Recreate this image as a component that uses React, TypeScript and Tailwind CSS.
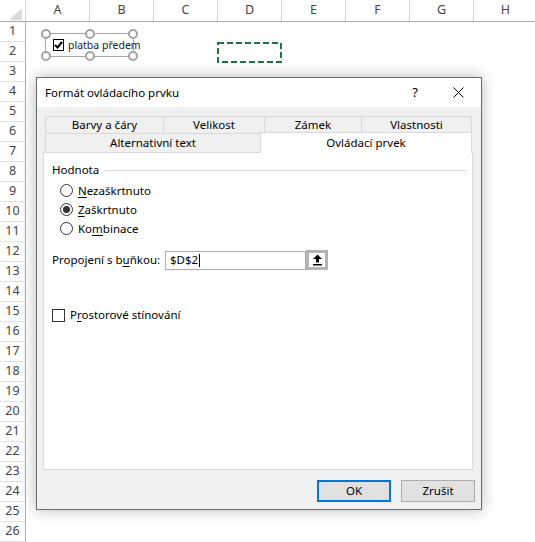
import React from 'react';

const columns = ['A', 'B', 'C', 'D', 'E', 'F', 'G', 'H'];
const rows = Array.from({ length: 26 }, (_, i) => i + 1);

const Radio: React.FC<{ checked?: boolean }> = ({ checked }) => (
  <span className="w-[13px] h-[13px] rounded-full border border-[#333] bg-white flex items-center justify-center shrink-0">
    {checked && <span className="w-[7px] h-[7px] rounded-full bg-[#333]" />}
  </span>
);

const Handle: React.FC<{ className: string }> = ({ className }) => (
  <span className={`absolute w-[10px] h-[10px] rounded-full border-2 border-[#a3a3a3] bg-white ${className}`} />
);

const App: React.FC = () => {
  return (
    <div className="relative w-[535px] h-[542px] bg-white overflow-hidden font-['Noto_Sans',sans-serif] text-black">
      {/* Column headers */}
      <div className="flex h-[22px] border-b border-[#ababab]">
        <div className="w-[26px] shrink-0 border-r border-[#d4d4d4] relative">
          <svg className="absolute left-[9px] top-[8px]" width="13" height="12" viewBox="0 0 13 12">
            <polygon points="13,0 13,12 0,12" fill="#dadada" />
          </svg>
        </div>
        {columns.map((c) => (
          <div key={c} className="w-[64px] shrink-0 border-r border-[#d4d4d4] flex items-center justify-center text-[12.5px] text-[#444]">
            {c}
          </div>
        ))}
      </div>

      {/* Rows */}
      <div className="flex">
        <div className="w-[26px] shrink-0 border-r border-[#ababab]">
          {rows.map((r) => (
            <div key={r} className="h-[20px] border-b border-[#e1e1e1] flex items-center justify-center text-[12.5px] text-[#444]">
              {r}
            </div>
          ))}
        </div>
        <div className="flex-1 bg-white" />
      </div>

      {/* Form control checkbox in sheet */}
      <div className="absolute left-[45px] top-[33px] w-[89px] h-[24px] border border-[#a6a6a6]">
        <div className="flex items-center h-full pl-[7px] gap-[4px]">
          <span className="w-[12px] h-[12px] border border-black bg-white flex items-center justify-center">
            <svg width="9" height="8" viewBox="0 0 9 8">
              <path d="M1 4 L3.5 6.5 L8 1" fill="none" stroke="#000" strokeWidth="2" />
            </svg>
          </span>
          <span className="text-[10.5px] text-[#222] whitespace-nowrap leading-none">platba předem</span>
        </div>
        <Handle className="-left-[5px] -top-[5px]" />
        <Handle className="left-[39px] -top-[5px]" />
        <Handle className="-right-[5px] -top-[5px]" />
        <Handle className="-left-[5px] -bottom-[5px]" />
        <Handle className="left-[39px] -bottom-[5px]" />
        <Handle className="-right-[5px] -bottom-[5px]" />
      </div>

      {/* Copy marquee on D2 */}
      <svg className="absolute left-[217px] top-[42px]" width="65" height="21" viewBox="0 0 65 21">
        <rect x="1" y="1" width="63" height="19" fill="none" stroke="#217346" strokeWidth="2" strokeDasharray="6 3" />
      </svg>

      {/* Dialog */}
      <div className="absolute left-[36px] top-[77px] w-[446px] h-[433px] border border-[#6a6a6a] bg-[#f0f0f0] shadow-[0_0_14px_rgba(0,0,0,0.28)] flex flex-col text-[11.5px]">
        <div className="h-[29px] bg-white flex items-center pl-[8px] shrink-0">
          <span className="flex-1 text-[11.5px]">Formát ovládacího prvku</span>
          <span className="text-[13px] mr-[35px]">?</span>
          <svg className="mr-[17px]" width="11" height="11" viewBox="0 0 11 11">
            <path d="M0.5 0.5 L10.5 10.5 M10.5 0.5 L0.5 10.5" stroke="#000" strokeWidth="1" />
          </svg>
        </div>

        <div className="flex-1 flex flex-col pl-[6px] pr-[6px] pt-[9px]">
          {/* Tabs */}
          <div className="ml-[2px] mr-[2px] flex flex-col">
            <div className="flex h-[17px]">
              <div className="w-[118px] border-t border-l border-[#d9d9d9] flex items-center justify-center">Barvy a čáry</div>
              <div className="w-[101px] border-t border-l border-[#d9d9d9] flex items-center justify-center">Velikost</div>
              <div className="w-[97px] border-t border-l border-[#d9d9d9] flex items-center justify-center">Zámek</div>
              <div className="w-[111px] border-t border-l border-r border-[#d9d9d9] flex items-center justify-center">Vlastnosti</div>
            </div>
            <div className="flex h-[19px]">
              <div className="w-[215px] border-t border-l border-[#d9d9d9] flex items-center justify-center">Alternativní text</div>
              <div className="relative z-10 w-[212px] h-[21px] -mt-[1px] bg-white border-t border-l border-r border-[#d9d9d9] flex items-center justify-center">
                Ovládací prvek
              </div>
            </div>
          </div>

          {/* Panel */}
          <div className="mr-[2px] h-[318px] bg-white border border-[#d9d9d9] pl-[8px] pt-[9px] flex flex-col">
            <div className="flex items-center h-[16px]">
              <span>Hodnota</span>
              <span className="flex-1 h-px bg-[#dcdcdc] ml-[5px] mr-[5px]" />
            </div>
            <div className="mt-[3px] ml-[8px] flex flex-col">
              <div className="h-[19px] flex items-center gap-[5px]">
                <Radio />
                <span><span className="underline underline-offset-2">N</span>ezaškrtnuto</span>
              </div>
              <div className="h-[19px] flex items-center gap-[5px]">
                <Radio checked />
                <span><span className="underline underline-offset-2">Z</span>aškrtnuto</span>
              </div>
              <div className="h-[19px] flex items-center gap-[5px]">
                <Radio />
                <span>Ko<span className="underline underline-offset-2">m</span>binace</span>
              </div>
            </div>

            <div className="mt-[12px] h-[20px] flex items-center">
              <span className="w-[113px] shrink-0">
                Propojení s b<span className="underline underline-offset-2">u</span>ňkou:
              </span>
              <div className="w-[141px] h-[19px] border border-[#ababab] flex items-center pl-[4px]">
                <span>$D$2</span>
                <span className="w-px h-[13px] bg-black ml-[1px]" />
              </div>
              <div className="w-[22px] h-[20px] border-[3px] border-[#b4b4b4] bg-white flex items-center justify-center">
                <svg width="11" height="12" viewBox="0 0 11 12">
                  <path d="M5.5 0.5 L10 5 L7 5 L7 8.5 L4 8.5 L4 5 L1 5 Z" fill="#000" />
                  <rect x="1" y="10" width="9" height="1.5" fill="#000" />
                </svg>
              </div>
            </div>

            <div className="mt-[38px] h-[14px] flex items-center gap-[5px]">
              <span className="w-[13px] h-[13px] border border-[#333] bg-white shrink-0" />
              <span>P<span className="underline underline-offset-2">r</span>ostorové stínování</span>
            </div>
          </div>

          {/* Buttons */}
          <div className="mt-[10px] flex justify-end gap-[10px]">
            <button className="w-[74px] h-[22px] bg-[#e1e1e1] border-2 border-[#0078d7] text-[11.5px] flex items-center justify-center">OK</button>
            <button className="w-[74px] h-[22px] bg-[#e1e1e1] border border-[#adadad] text-[11.5px] flex items-center justify-center">Zrušit</button>
          </div>
        </div>
      </div>
    </div>
  );
};

export default App;
